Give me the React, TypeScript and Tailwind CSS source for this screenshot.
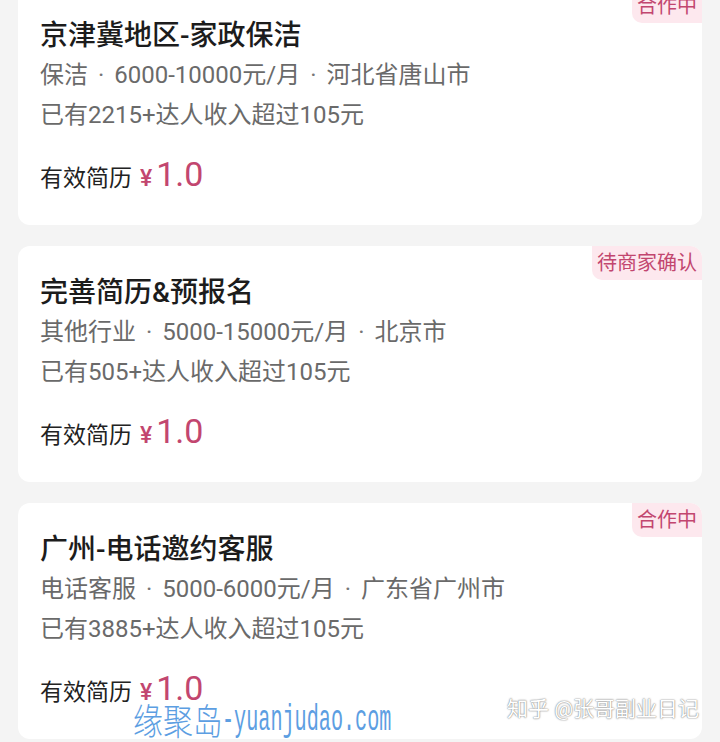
const jobs = [
  {
    title: "京津冀地区-家政保洁",
    meta: ["保洁", "6000-10000元/月", "河北省唐山市"],
    stat: "已有2215+达人收入超过105元",
    status: "合作中",
  },
  {
    title: "完善简历&预报名",
    meta: ["其他行业", "5000-15000元/月", "北京市"],
    stat: "已有505+达人收入超过105元",
    status: "待商家确认",
  },
  {
    title: "广州-电话邀约客服",
    meta: ["电话客服", "5000-6000元/月", "广东省广州市"],
    stat: "已有3885+达人收入超过105元",
    status: "合作中",
  },
];

const font = "font-['Roboto','Noto_Sans_CJK_SC',sans-serif]";

const JobCard = ({ job }: { job: (typeof jobs)[number] }) => {
  return (
    <div className="relative bg-white rounded-[12px] pt-[29px] pb-[29px] pl-[22px] pr-4 h-[236px] shrink-0">
      <div className="absolute top-0 right-0 h-[34px] px-[5px] flex items-center bg-[#fde8ee] rounded-tr-[12px] rounded-bl-[10px] text-[20px] leading-none text-[#c2466f]">
        {job.status}
      </div>
      <h2 className="text-[28px] leading-[36px] font-medium text-[#1c1c1c]">
        {job.title}
      </h2>
      <p className="mt-[3px] flex items-center text-[24px] leading-[36px] text-[#6a6a6a] whitespace-nowrap">
        {job.meta.map((m, i) => (
          <span key={i} className="flex items-center">
            {i > 0 && <span className="mx-[10px] text-[24px] text-[#777]">·</span>}
            {m}
          </span>
        ))}
      </p>
      <p className="mt-[4px] text-[24px] leading-[36px] text-[#6a6a6a]">{job.stat}</p>
      <div className="mt-[19px] h-[44px] flex items-baseline">
        <span className="text-[23px] text-[#222]">有效简历</span>
        <span className="ml-[8px] text-[23px] font-medium text-[#c2466f]">¥</span>
        <span className="ml-[4px] text-[34px] leading-[44px] text-[#c2466f]">1.0</span>
      </div>
    </div>
  );
};

export default function App() {
  return (
    <div className={`relative h-[742px] w-[720px] overflow-hidden bg-[#f4f4f4] ${font}`}>
      <div className="flex flex-col gap-[21px] px-[18px] -mt-[11px]">
        {jobs.map((job, i) => (
          <JobCard key={i} job={job} />
        ))}
      </div>

      {/* watermarks */}
      <span className="absolute left-[133px] top-[701px] inline-block origin-left scale-x-[0.83] text-[36px] leading-[44px] font-light text-[#5c9ee2] whitespace-nowrap">
        缘聚岛
      </span>
      <span className="absolute left-[222px] top-[699px] inline-block origin-left scale-x-[0.56] text-[36px] leading-[44px] text-[#5c9ee2] font-['Liberation_Mono',monospace] whitespace-nowrap">
        -yuanjudao.com
      </span>
      <div className="absolute left-[507px] top-[695px] text-[21px] leading-[28px] text-white whitespace-nowrap [text-shadow:0_0_1px_#777,0_0_2px_#999]">
        知乎 @张哥副业日记
      </div>
    </div>
  );
}
